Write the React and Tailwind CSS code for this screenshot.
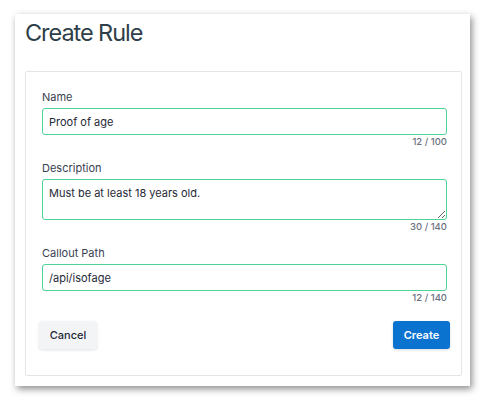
import React from "react";

function Field({ label, value, counter, area }) {
  return (
    <div className="flex flex-col">
      <label className="text-[11px] leading-[16px] text-[#374151] mb-[3px] ml-[3px]">{label}</label>
      {area ? (
        <textarea
          defaultValue={value}
          className="mx-[3px] h-[41px] border border-[#4cd497] rounded-[3px] px-[6px] py-[6px] text-[11px] leading-[14px] text-[#1f2937] outline-none resize-y"
          style={{ fontFamily: "Inter, sans-serif" }}
        />
      ) : (
        <input
          defaultValue={value}
          className="mx-[3px] h-[27px] border border-[#4cd497] rounded-[3px] px-[6px] text-[11px] text-[#1f2937] outline-none"
          style={{ fontFamily: "Inter, sans-serif" }}
        />
      )}
      <div className="mt-[1px] mr-[3px] text-right text-[9.5px] leading-[12px] text-[#6b7280] font-medium">{counter}</div>
    </div>
  );
}

export default function App() {
  return (
    <div className="min-h-screen bg-white pt-[14px] pl-[15px]" style={{ fontFamily: "Inter, 'Noto Sans', sans-serif" }}>
      <div className="w-[455px] h-[372px] bg-white flex flex-col pl-[10px] pr-[8px] pb-[10px] shadow-[2px_3px_7px_rgba(0,0,0,0.45)]">
        <h1 className="mt-[4px] text-[23.5px] leading-[29px] text-[#2f3f4a] tracking-[-0.045em]">Create Rule</h1>
        <div className="mt-[24px] flex-1 border border-[#e3e5e8] rounded-[2px] pl-[13px] pr-[11px] pt-[17px] flex flex-col">
          <div className="flex flex-col gap-[12px]">
            <Field label="Name" value="Proof of age" counter="12 / 100" />
            <Field label="Description" value="Must be at least 18 years old." counter="30 / 140" area />
            <Field label="Callout Path" value="/api/isofage" counter="12 / 140" />
          </div>
          <div className="mt-[17px] flex justify-between">
            <button className="w-[58px] h-[28px] rounded-[3px] bg-[#f3f4f6] text-[11px] font-medium text-[#1f2937] shadow-[0_1px_3px_rgba(0,0,0,0.12)]">Cancel</button>
            <button className="w-[57px] h-[28px] rounded-[3px] bg-[#0a73d0] text-[11px] font-semibold text-white shadow-[0_1px_3px_rgba(0,0,0,0.15)]">Create</button>
          </div>
        </div>
      </div>
    </div>
  );
}
